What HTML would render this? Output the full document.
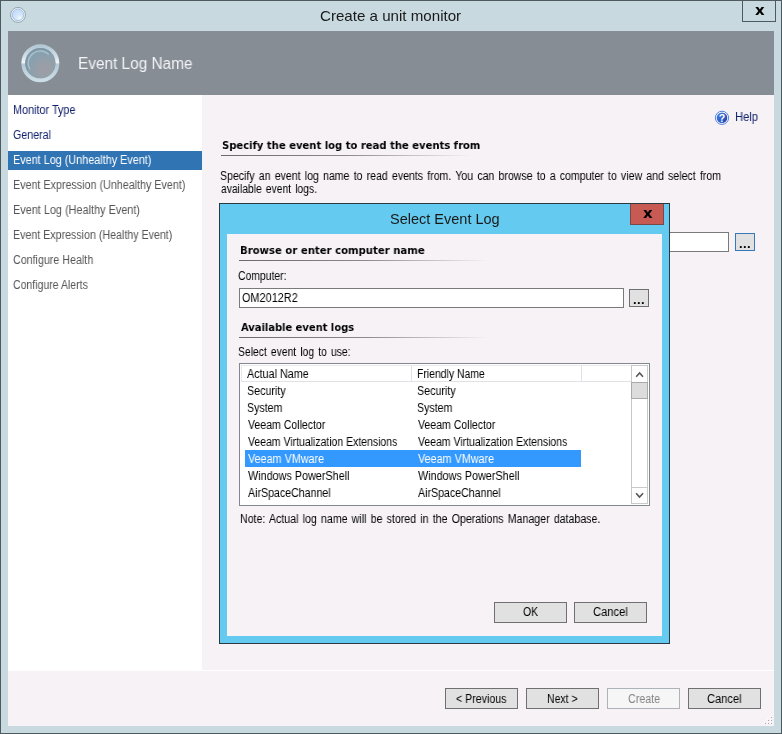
<!DOCTYPE html>
<html>
<head>
<meta charset="utf-8">
<title>Create a unit monitor</title>
<style>
html,body{margin:0;padding:0;}
body{width:782px;height:734px;overflow:hidden;background:#c8d9e0;font-family:"Liberation Sans",sans-serif;font-size:12px;color:#000;position:relative;}
.abs{position:absolute;}
.t{position:absolute;will-change:transform;white-space:nowrap;line-height:14px;font-size:12px;transform-origin:0 0;}
.t.ttl{font-size:14.5px;line-height:20px;color:#1a1a1a;}
.t.hd{font-size:16px;line-height:22px;color:#f2f4f5;}
.t.nav{color:#10206a;}
.t.nav.g{color:#555;}
.t.bold{font-family:"DejaVu Sans","Liberation Sans",sans-serif;font-weight:bold;font-size:11px;}
#frame{left:0;top:0;width:780px;height:732px;border:1px solid #4f5a5e;background:#c8d9e0;}
#hdr{left:8px;top:31px;width:766px;height:64px;background:#868d95;}
#side{left:8px;top:95px;width:194px;height:575px;background:#fff;}
#main{left:202px;top:95px;width:572px;height:575px;background:#f7f2f6;}
#foot{left:8px;top:670px;width:766px;height:56px;background:#f7f2f6;border-top:1px solid #fff;box-sizing:border-box;}
#sel{left:8px;top:151px;width:194px;height:19px;background:#3074b4;}
.btn{position:absolute;box-sizing:border-box;border:1px solid #707070;background:#e1e1e1;height:21px;width:73px;}
.btn.dis{border-color:#adb3b8;background:#f6f6f6;}
.tb{position:absolute;box-sizing:border-box;border:1px solid #7a7a7a;background:#fff;}
.x{position:absolute;will-change:transform;transform:scaleX(1.07);transform-origin:0 0;font-family:"DejaVu Sans",sans-serif;font-weight:bold;font-size:14px;line-height:18px;color:#000;}
.ul{position:absolute;height:1px;background:linear-gradient(to right,#6a6a6a 0%,#8a8a8a 50%,#f7f2f6 100%);}
.dots{position:absolute;will-change:transform;font-weight:bold;font-size:13px;line-height:12px;letter-spacing:0.4px;}
.hl{position:absolute;height:15px;border-top:1px solid #ebe8ed;border-bottom:1px solid #e4e1e6;border-right:1px solid #e4e1e6;top:365px;}
</style>
</head>
<body>
<div id="frame" class="abs"></div>
<svg class="abs" style="left:9px;top:6px" width="18" height="18" viewBox="0 0 18 18">
  <defs>
    <radialGradient id="g1" cx="0.66" cy="0.78" r="0.6"><stop offset="0" stop-color="#fbfdea"/><stop offset="0.4" stop-color="#d8e9fb"/><stop offset="1" stop-color="#c8defa"/></radialGradient>
  </defs>
  <circle cx="9" cy="8.9" r="7.5" fill="#e6edf5" stroke="#8da2a8" stroke-width="0.9"/>
  <circle cx="9" cy="8.9" r="5.7" fill="url(#g1)" stroke="#a6c0e6" stroke-width="0.9"/>
</svg>
<div class="abs" style="left:742px;top:0px;width:34px;height:22px;border:1px solid #4f5a5e;box-sizing:border-box;"></div>
<div class="x" style="left:754.7px;top:1px;">x</div>
<div id="hdr" class="abs"></div>
<svg class="abs" style="left:20px;top:43px" width="42" height="42" viewBox="0 0 42 42">
  <defs>
    <radialGradient id="g2" cx="0.66" cy="0.72" r="0.62"><stop offset="0" stop-color="#9e9ca4"/><stop offset="0.35" stop-color="#989fa8"/><stop offset="1" stop-color="#86a0af"/></radialGradient>
    <linearGradient id="g3" x1="0" y1="0" x2="0" y2="1"><stop offset="0" stop-color="#b3c9d5"/><stop offset="0.3" stop-color="#cfdee6"/><stop offset="0.49" stop-color="#f3f8fa"/><stop offset="0.52" stop-color="#b4cad6"/><stop offset="1" stop-color="#cbdde6"/></linearGradient>
  </defs>
  <circle cx="20.35" cy="20.2" r="17" fill="none" stroke="url(#g3)" stroke-width="4"/>
  <circle cx="20.35" cy="20.2" r="15.1" fill="url(#g2)"/>
  <path d="M8.05 27.3 A14.2 14.2 0 0 1 30.1 9.9" fill="none" stroke="#7d95a3" stroke-width="1.5" opacity="0.8"/>
  <path d="M9.78 26.3 A12.2 12.2 0 0 1 28.76 11.37" fill="none" stroke="#abc2ce" stroke-width="1.4" opacity="0.9"/>
</svg>
<div id="side" class="abs"></div>
<div id="main" class="abs"></div>
<div id="foot" class="abs"></div>
<div id="sel" class="abs"></div>
<svg class="abs" style="left:714px;top:110px" width="16" height="16" viewBox="0 0 16 16">
  <defs><linearGradient id="g4" x1="0" y1="0" x2="1" y2="1"><stop offset="0" stop-color="#4a86e8"/><stop offset="1" stop-color="#1a3cac"/></linearGradient></defs>
  <circle cx="8" cy="7.8" r="6.6" fill="#fff" stroke="#4f7fdc" stroke-width="1"/>
  <circle cx="8" cy="7.8" r="5.3" fill="url(#g4)"/>
  <text x="8" y="11.6" text-anchor="middle" font-family="Liberation Sans, sans-serif" font-weight="bold" font-size="10.5" fill="#fff">?</text>
</svg>
<div class="ul" style="left:221px;top:155px;width:250px;"></div>
<div class="tb" style="left:560px;top:232px;width:169px;height:20px;"></div>
<div class="btn" style="left:735px;top:233px;width:20px;height:18px;border-color:#3778b8;"></div>
<div class="dots" style="left:739px;top:238px;">...</div>
<div class="btn" style="left:445px;top:688px;"></div>
<div class="btn" style="left:526px;top:688px;"></div>
<div class="btn dis" style="left:607px;top:688px;"></div>
<div class="btn" style="left:688px;top:688px;"></div>
<svg class="abs" style="left:763px;top:715px" width="11" height="11" viewBox="0 0 11 11"><rect x="7" y="1" width="1" height="1" fill="#fff"/><rect x="8" y="2" width="1" height="1" fill="#a8a8a8"/><rect x="4" y="4" width="1" height="1" fill="#fff"/><rect x="5" y="5" width="1" height="1" fill="#a8a8a8"/><rect x="7" y="4" width="1" height="1" fill="#fff"/><rect x="8" y="5" width="1" height="1" fill="#a8a8a8"/><rect x="1" y="7" width="1" height="1" fill="#fff"/><rect x="2" y="8" width="1" height="1" fill="#a8a8a8"/><rect x="4" y="7" width="1" height="1" fill="#fff"/><rect x="5" y="8" width="1" height="1" fill="#a8a8a8"/><rect x="7" y="7" width="1" height="1" fill="#fff"/><rect x="8" y="8" width="1" height="1" fill="#a8a8a8"/></svg>
<!-- dialog -->
<div class="abs" style="left:219px;top:203px;width:451px;height:441px;box-sizing:border-box;border:1px solid #2b3a42;background:#64caef;"></div>
<div class="abs" style="left:227px;top:234px;width:435px;height:402px;background:#f7f2f6;"></div>
<div class="abs" style="left:630px;top:204px;width:34px;height:21px;background:#c85a54;border:1px solid #7a4a48;border-top:none;box-sizing:border-box;"></div>
<div class="x" style="left:642.7px;top:204px;">x</div>
<div class="ul" style="left:239px;top:260px;width:250px;"></div>
<div class="tb" style="left:239px;top:288px;width:385px;height:20px;"></div>
<div class="btn" style="left:629px;top:289px;width:20px;height:18px;"></div>
<div class="dots" style="left:633px;top:294px;">...</div>
<div class="ul" style="left:239px;top:337px;width:250px;"></div>
<!-- listview -->
<div class="abs" style="left:239px;top:363px;width:411px;height:143px;box-sizing:border-box;border:1px solid #828790;background:#fff;"></div>
<div class="hl" style="left:241px;width:169px;border-left:1px solid #e8e5ea;"></div>
<div class="hl" style="left:412px;width:169px;"></div>
<div class="hl" style="left:582px;width:49px;border-right:none;"></div>
<div class="abs" style="left:245px;top:450px;width:336px;height:17px;background:#3399ff;"></div>
<div class="abs" style="left:631px;top:365px;width:17px;height:139px;background:#fff;border:1px solid #c9c9c9;box-sizing:border-box;"></div>
<div class="abs" style="left:631px;top:487px;width:17px;height:1px;background:#c9c9c9;"></div>
<div class="abs" style="left:631px;top:382px;width:17px;height:17px;background:#dcdcdc;border:1px solid #a9a9a9;box-sizing:border-box;"></div>
<svg class="abs" style="left:631px;top:365px" width="17" height="17"><path d="M5.2 11.7 L8.6 8.0 L12 11.7" fill="none" stroke="#555" stroke-width="1.6"/></svg>
<svg class="abs" style="left:631px;top:487px" width="17" height="17"><path d="M5.1 6.3 L8.5 10.0 L12.1 6.3" fill="none" stroke="#555" stroke-width="1.6"/></svg>
<div class="btn" style="left:494px;top:602px;"></div>
<div class="btn" style="left:574px;top:602px;"></div>

<header>
<div class="t ttl" style="left:319.7px;top:6px;transform:scaleX(1.0425);">Create a unit monitor</div>
<div class="t hd" style="left:77.8px;top:53px;transform:scaleX(0.9607);">Event Log Name</div>
</header>
<nav>
<div class="t nav" style="left:12.8px;top:103px;transform:scaleX(0.9029);">Monitor Type</div>
<div class="t nav" style="left:12.8px;top:128px;transform:scaleX(0.8902);">General</div>
<div class="t nav" style="left:12.8px;top:153px;transform:scaleX(0.9020);color:#fff;">Event Log (Unhealthy Event)</div>
<div class="t nav g" style="left:12.8px;top:178px;transform:scaleX(0.8942);">Event Expression (Unhealthy Event)</div>
<div class="t nav g" style="left:12.8px;top:203px;transform:scaleX(0.9065);">Event Log (Healthy Event)</div>
<div class="t nav g" style="left:12.8px;top:228px;transform:scaleX(0.8876);">Event Expression (Healthy Event)</div>
<div class="t nav g" style="left:12.8px;top:253px;transform:scaleX(0.8909);">Configure Health</div>
<div class="t nav g" style="left:12.8px;top:278px;transform:scaleX(0.8762);">Configure Alerts</div>
</nav>
<main>
<div class="t nav" style="left:734.9px;top:110px;transform:scaleX(0.9304);">Help</div>
<div class="t bold" style="left:221.6px;top:139px;transform:scaleX(0.9110);">Specify the event log to read the events from</div>
<div class="t s" style="left:220.1px;top:169px;transform:scaleX(0.8806);word-spacing:1.4px;">Specify an event log name to read events from. You can browse to a computer to view and select from</div>
<div class="t s" style="left:221.0px;top:182px;transform:scaleX(0.8604);word-spacing:1.4px;">available event logs.</div>
</main>
<footer>
<div class="t s" style="left:455.8px;top:692px;transform:scaleX(0.8857);">&lt; Previous</div>
<div class="t s" style="left:546.7px;top:692px;transform:scaleX(0.8765);">Next &gt;</div>
<div class="t s" style="left:628.0px;top:692px;transform:scaleX(0.8941);color:#838383;">Create</div>
<div class="t s" style="left:707.3px;top:692px;transform:scaleX(0.9250);">Cancel</div>
</footer>
<section role="dialog" aria-label="Select Event Log">
<div class="t ttl" style="left:389.7px;top:209px;transform:scaleX(0.9981);">Select Event Log</div>
<div class="t bold" style="left:239.6px;top:244px;transform:scaleX(0.9191);">Browse or enter computer name</div>
<div class="t s" style="left:237.8px;top:269px;transform:scaleX(0.8648);">Computer:</div>
<div class="t s" style="left:241.8px;top:291px;transform:scaleX(0.9083);">OM2012R2</div>
<div class="t bold" style="left:241.2px;top:321px;transform:scaleX(0.9024);">Available event logs</div>
<div class="t s" style="left:237.8px;top:345px;transform:scaleX(0.8633);word-spacing:1.4px;">Select event log to use:</div>
<div class="t s" style="left:246.7px;top:367px;transform:scaleX(0.8985);">Actual Name</div>
<div class="t s" style="left:416.9px;top:367px;transform:scaleX(0.8684);">Friendly Name</div>
<div class="t s" style="left:240.1px;top:512px;transform:scaleX(0.8842);word-spacing:1.4px;">Note: Actual log name will be stored in the Operations Manager database.</div>
<div class="t s" style="left:522.6px;top:605px;transform:scaleX(0.8750);">OK</div>
<div class="t s" style="left:593.4px;top:605px;transform:scaleX(0.9306);">Cancel</div>
<div class="t s" style="left:246.8px;top:384px;transform:scaleX(0.8929);">Security</div>
<div class="t s" style="left:416.9px;top:384px;transform:scaleX(0.8929);">Security</div>
<div class="t s" style="left:246.8px;top:401px;transform:scaleX(0.8842);">System</div>
<div class="t s" style="left:416.9px;top:401px;transform:scaleX(0.8842);">System</div>
<div class="t s" style="left:247.7px;top:418px;transform:scaleX(0.8784);">Veeam Collector</div>
<div class="t s" style="left:417.8px;top:418px;transform:scaleX(0.8784);">Veeam Collector</div>
<div class="t s" style="left:247.7px;top:435px;transform:scaleX(0.8719);">Veeam Virtualization Extensions</div>
<div class="t s" style="left:417.8px;top:435px;transform:scaleX(0.8719);">Veeam Virtualization Extensions</div>
<div class="t s" style="left:247.7px;top:452px;transform:scaleX(0.8988);color:#fff;">Veeam VMware</div>
<div class="t s" style="left:417.8px;top:452px;transform:scaleX(0.8988);color:#fff;">Veeam VMware</div>
<div class="t s" style="left:247.7px;top:469px;transform:scaleX(0.9000);">Windows PowerShell</div>
<div class="t s" style="left:417.8px;top:469px;transform:scaleX(0.9000);">Windows PowerShell</div>
<div class="t s" style="left:247.7px;top:486px;transform:scaleX(0.8849);">AirSpaceChannel</div>
<div class="t s" style="left:417.8px;top:486px;transform:scaleX(0.8849);">AirSpaceChannel</div>
</section>
</body>
</html>
